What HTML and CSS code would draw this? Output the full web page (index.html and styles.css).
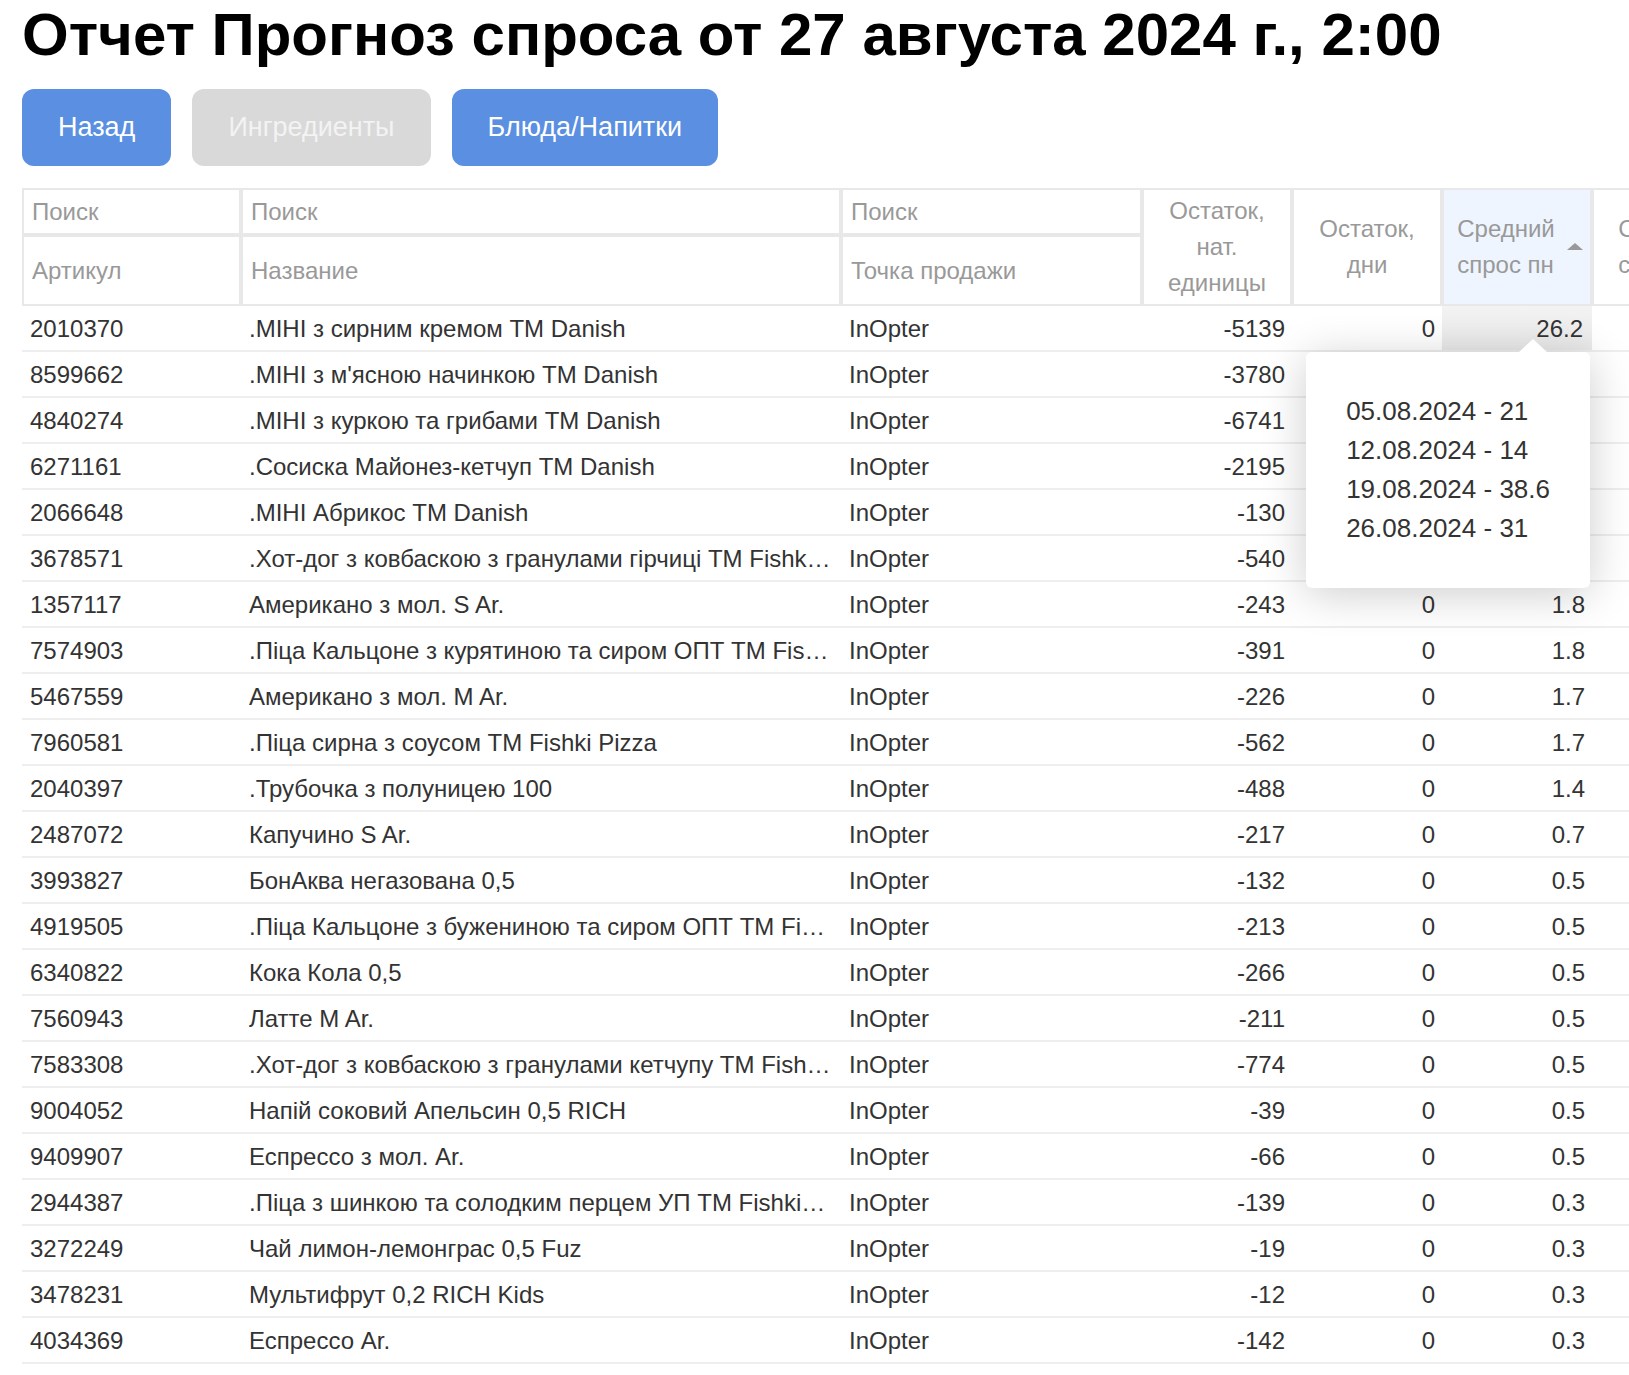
FILE: index.html
```html
<!DOCTYPE html>
<html lang="ru">
<head>
<meta charset="utf-8">
<title>Отчет Прогноз спроса</title>
<link rel="stylesheet" href="styles.css">
</head>
<body>
<div class="page">
  <h1 class="title">Отчет Прогноз спроса от 27 августа 2024 г., 2:00</h1>
  <div class="actions">
    <button class="btn btn-primary">Назад</button>
    <button class="btn btn-disabled" disabled>Ингредиенты</button>
    <button class="btn btn-primary">Блюда/Напитки</button>
  </div>
  <div class="table-wrap">
    <table class="report">
      <colgroup>
        <col class="c-sku"><col class="c-name"><col class="c-point"><col class="c-num"><col class="c-num"><col class="c-num"><col class="c-num">
      </colgroup>
      <thead>
        <tr class="search-row">
          <th class="search">Поиск</th>
          <th class="search">Поиск</th>
          <th class="search">Поиск</th>
          <th class="num-head" rowspan="2">Остаток,<br>нат.<br>единицы</th>
          <th class="num-head" rowspan="2">Остаток,<br>дни</th>
          <th class="num-head sorted" rowspan="2"><div class="sort-wrap"><span>Средний<br>спрос пн</span><span class="sort-arrow"></span></div></th>
          <th class="num-head" rowspan="2"><div class="sort-wrap"><span>Средний<br>спрос вт</span></div></th>
        </tr>
        <tr class="label-row">
          <th>Артикул</th>
          <th>Название</th>
          <th>Точка продажи</th>
        </tr>
      </thead>
      <tbody>
        <tr><td>2010370</td><td class="name">.МІНІ з сирним кремом ТМ Danish</td><td>InOpter</td><td class="num">-5139</td><td class="num">0</td><td class="num active">26.2
          <div class="tip">05.08.2024 - 21<br>12.08.2024 - 14<br>19.08.2024 - 38.6<br>26.08.2024 - 31</div></td><td class="num">24.8</td></tr>
        <tr><td>8599662</td><td class="name">.МІНІ з м'ясною начинкою ТМ Danish</td><td>InOpter</td><td class="num">-3780</td><td class="num">0</td><td class="num">12.4</td><td class="num">11.9</td></tr>
        <tr><td>4840274</td><td class="name">.МІНІ з куркою та грибами ТМ Danish</td><td>InOpter</td><td class="num">-6741</td><td class="num">0</td><td class="num">8.3</td><td class="num">8.1</td></tr>
        <tr><td>6271161</td><td class="name">.Сосиска Майонез-кетчуп ТМ Danish</td><td>InOpter</td><td class="num">-2195</td><td class="num">0</td><td class="num">4.6</td><td class="num">4.2</td></tr>
        <tr><td>2066648</td><td class="name">.МІНІ Абрикос ТМ Danish</td><td>InOpter</td><td class="num">-130</td><td class="num">0</td><td class="num">3.1</td><td class="num">2.9</td></tr>
        <tr><td>3678571</td><td class="name">.Хот-дог з ковбаскою з гранулами гірчиці ТМ Fishki Pizza</td><td>InOpter</td><td class="num">-540</td><td class="num">0</td><td class="num">2.2</td><td class="num">2.0</td></tr>
        <tr><td>1357117</td><td class="name">Американо з мол. S Ar.</td><td>InOpter</td><td class="num">-243</td><td class="num">0</td><td class="num">1.8</td><td class="num">1.6</td></tr>
        <tr><td>7574903</td><td class="name">.Піца Кальцоне з курятиною та сиром ОПТ ТМ Fishki Pizza</td><td>InOpter</td><td class="num">-391</td><td class="num">0</td><td class="num">1.8</td><td class="num">1.5</td></tr>
        <tr><td>5467559</td><td class="name">Американо з мол. M Ar.</td><td>InOpter</td><td class="num">-226</td><td class="num">0</td><td class="num">1.7</td><td class="num">1.4</td></tr>
        <tr><td>7960581</td><td class="name">.Піца сирна з соусом ТМ Fishki Pizza</td><td>InOpter</td><td class="num">-562</td><td class="num">0</td><td class="num">1.7</td><td class="num">1.3</td></tr>
        <tr><td>2040397</td><td class="name">.Трубочка з полуницею 100</td><td>InOpter</td><td class="num">-488</td><td class="num">0</td><td class="num">1.4</td><td class="num">1.2</td></tr>
        <tr><td>2487072</td><td class="name">Капучино S Ar.</td><td>InOpter</td><td class="num">-217</td><td class="num">0</td><td class="num">0.7</td><td class="num">0.6</td></tr>
        <tr><td>3993827</td><td class="name">БонАква негазована 0,5</td><td>InOpter</td><td class="num">-132</td><td class="num">0</td><td class="num">0.5</td><td class="num">0.4</td></tr>
        <tr><td>4919505</td><td class="name">.Піца Кальцоне з бужениною та сиром ОПТ ТМ Fishki Pizza</td><td>InOpter</td><td class="num">-213</td><td class="num">0</td><td class="num">0.5</td><td class="num">0.4</td></tr>
        <tr><td>6340822</td><td class="name">Кока Кола 0,5</td><td>InOpter</td><td class="num">-266</td><td class="num">0</td><td class="num">0.5</td><td class="num">0.4</td></tr>
        <tr><td>7560943</td><td class="name">Латте M Ar.</td><td>InOpter</td><td class="num">-211</td><td class="num">0</td><td class="num">0.5</td><td class="num">0.3</td></tr>
        <tr><td>7583308</td><td class="name">.Хот-дог з ковбаскою з гранулами кетчупу ТМ Fishki Pizza</td><td>InOpter</td><td class="num">-774</td><td class="num">0</td><td class="num">0.5</td><td class="num">0.3</td></tr>
        <tr><td>9004052</td><td class="name">Напій соковий Апельсин 0,5 RICH</td><td>InOpter</td><td class="num">-39</td><td class="num">0</td><td class="num">0.5</td><td class="num">0.3</td></tr>
        <tr><td>9409907</td><td class="name">Еспрессо з мол. Ar.</td><td>InOpter</td><td class="num">-66</td><td class="num">0</td><td class="num">0.5</td><td class="num">0.3</td></tr>
        <tr><td>2944387</td><td class="name">.Піца з шинкою та солодким перцем УП ТМ Fishki Pizza</td><td>InOpter</td><td class="num">-139</td><td class="num">0</td><td class="num">0.3</td><td class="num">0.2</td></tr>
        <tr><td>3272249</td><td class="name">Чай лимон-лемонграс 0,5 Fuz</td><td>InOpter</td><td class="num">-19</td><td class="num">0</td><td class="num">0.3</td><td class="num">0.2</td></tr>
        <tr><td>3478231</td><td class="name">Мультифрут 0,2 RICH Kids</td><td>InOpter</td><td class="num">-12</td><td class="num">0</td><td class="num">0.3</td><td class="num">0.2</td></tr>
        <tr><td>4034369</td><td class="name">Еспрессо Ar.</td><td>InOpter</td><td class="num">-142</td><td class="num">0</td><td class="num">0.3</td><td class="num">0.2</td></tr>
      </tbody>
    </table>
  </div>
</div>
</body>
</html>
```
FILE: styles.css
```css
html, body {
  margin: 0;
  padding: 0;
  background: #fff;
}
body {
  font-family: "Liberation Sans", Arial, sans-serif;
  color: #333;
  overflow: hidden;
}
.page {
  padding-left: 22px;
}
.title {
  margin: 0;
  font-size: 60px;
  font-weight: bold;
  line-height: 69px;
  color: #000;
  white-space: nowrap;
}
.actions {
  display: flex;
  gap: 21px;
  margin-top: 20px;
}
.btn {
  font-family: "Liberation Sans", Arial, sans-serif;
  font-size: 27px;
  line-height: 29px;
  padding: 24px 36px;
  border: none;
  border-radius: 12px;
  color: #fff;
}
.btn-primary {
  background: #5a8fe1;
}
.btn-disabled {
  background: #d9d9d9;
  color: #f3f3f3;
}
.table-wrap {
  margin-top: 22px;
  overflow: hidden;
  padding-bottom: 8px;
}
.report {
  border-collapse: separate;
  border-spacing: 0;
  table-layout: fixed;
  width: 1720px;
  font-size: 24px;
}
.c-sku { width: 219px; }
.c-name { width: 600px; }
.c-point { width: 301px; }
.c-num { width: 150px; }
.report th {
  box-sizing: border-box;
  border: 2px solid #e8e8e8;
  font-weight: normal;
  color: #999;
  text-align: left;
  padding: 0 8px;
  vertical-align: middle;
  line-height: 28px;
}
.search-row th.search {
  height: 47px;
}
.label-row th {
  height: 71px;
}
.report th.num-head {
  text-align: center;
  line-height: 36px;
  padding: 0 6px;
}
.report th.sorted {
  background: #eef5ff;
}
.sort-wrap {
  display: flex;
  align-items: center;
  justify-content: center;
  gap: 12px;
  text-align: left;
}
.sorted .sort-wrap {
  padding-left: 6px;
}
.sort-arrow {
  width: 0;
  height: 0;
  border-left: 8px solid transparent;
  border-right: 8px solid transparent;
  border-bottom: 7px solid #999;
  margin-top: -2px;
}
.report td {
  box-sizing: border-box;
  height: 46px;
  padding: 1px 8px 0;
  border-bottom: 2px solid #eeeeee;
  white-space: nowrap;
  overflow: hidden;
  text-overflow: ellipsis;
  line-height: 43px;
  color: #333;
}
.report td.name {
  padding-right: 10px;
}
.report td.num {
  text-align: right;
  padding-right: 7px;
}
.report td.active {
  position: relative;
  overflow: visible;
  padding-right: 9px;
  background: linear-gradient(#f3f3f3, #e9e9e9);
}
.tip {
  position: absolute;
  top: calc(100% + 2px);
  right: 2px;
  z-index: 5;
  width: max-content;
  padding: 40px;
  background: #fff;
  border-radius: 6px;
  box-shadow: 0 6px 45px rgba(0, 0, 0, 0.2);
  font-size: 26px;
  line-height: 39px;
  text-align: left;
  color: #333;
}
.tip::before {
  content: "";
  position: absolute;
  top: -13px;
  right: 43px;
  width: 0;
  height: 0;
  border-left: 14px solid transparent;
  border-right: 14px solid transparent;
  border-bottom: 13px solid #fff;
}
```
